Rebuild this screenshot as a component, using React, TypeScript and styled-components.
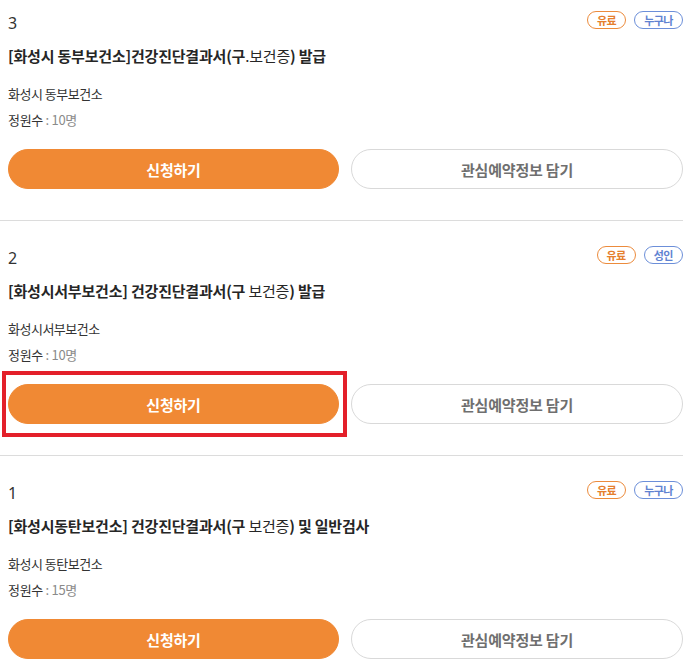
import React from "react";
import styled, { createGlobalStyle } from "styled-components";

const Global = createGlobalStyle`
  html, body { margin: 0; padding: 0; background: #fff; }
  body { font-family: "Noto Sans CJK KR", "Noto Sans", sans-serif; color: #222; }
`;

const List = styled.div`
  width: 683px;
`;

const Item = styled.div<{ $first?: boolean }>`
  padding: ${(p) => (p.$first ? "11px" : "25px")} 0 31px 8px;
  border-bottom: 1px solid #dcdcdc;
  &:last-child { border-bottom: none; }
`;

const Header = styled.div`
  display: flex;
  justify-content: space-between;
  align-items: flex-start;
  height: 25px;
`;

const Num = styled.div`
  font-family: "Noto Sans", sans-serif;
  font-size: 16px;
  line-height: 25px;
  color: #333;
`;

const Badges = styled.div`
  display: flex;
  gap: 8px;
`;

const Badge = styled.span<{ $tone: "orange" | "blue" }>`
  box-sizing: border-box;
  height: 18px;
  padding: 0 9px;
  border-radius: 9px;
  border: 1px solid ${(p) => (p.$tone === "orange" ? "#ec8b3c" : "#6c8fd9")};
  color: ${(p) => (p.$tone === "orange" ? "#e57f2e" : "#5f83d1")};
  font-size: 11px;
  font-weight: 700;
  line-height: 16px;
  letter-spacing: -0.5px;
`;

const Title = styled.div`
  margin-top: 8px;
  font-size: 15px;
  font-weight: 700;
  line-height: 24px;
  color: #262626;
  letter-spacing: -0.2px;
`;

const Light = styled.span`
  font-weight: 400;
`;

const Org = styled.div`
  margin-top: 16px;
  font-size: 13px;
  line-height: 20px;
  color: #333;
  letter-spacing: -0.5px;
`;

const Cap = styled.div`
  margin-top: 6px;
  font-size: 13px;
  line-height: 20px;
  color: #333;
  letter-spacing: -0.3px;
`;

const CapValue = styled.span`
  color: #8a8a8a;
`;

const Buttons = styled.div`
  margin-top: 19px;
  display: grid;
  grid-template-columns: 331px 332px;
  gap: 12px;
`;

const BtnWrap = styled.div`
  position: relative;
`;

const Btn = styled.button<{ $primary?: boolean }>`
  box-sizing: border-box;
  width: 100%;
  height: 40px;
  border-radius: 20px;
  border: 1px solid ${(p) => (p.$primary ? "#f08934" : "#d9d9d9")};
  background: ${(p) => (p.$primary ? "#f08934" : "#fff")};
  color: ${(p) => (p.$primary ? "#fff" : "#6f6f6f")};
  font-family: "Noto Sans CJK KR", sans-serif;
  font-size: 15px;
  font-weight: 700;
  letter-spacing: -0.2px;
  padding: 0;
  cursor: pointer;
`;

const Highlight = styled.div`
  position: absolute;
  left: -6px;
  right: -8px;
  top: -13px;
  bottom: -13px;
  border: 4px solid #e3202a;
  pointer-events: none;
`;

type Entry = {
  n: number;
  badges: { text: string; tone: "orange" | "blue" }[];
  title: React.ReactNode;
  org: string;
  cap: string;
  highlight?: boolean;
};

const entries: Entry[] = [
  {
    n: 3,
    badges: [
      { text: "유료", tone: "orange" },
      { text: "누구나", tone: "blue" },
    ],
    title: (
      <>
        [화성시 동부보건소]건강진단결과서(구<Light>.보건증</Light>) 발급
      </>
    ),
    org: "화성시 동부보건소",
    cap: "10명",
  },
  {
    n: 2,
    badges: [
      { text: "유료", tone: "orange" },
      { text: "성인", tone: "blue" },
    ],
    title: (
      <>
        [화성시서부보건소] 건강진단결과서(구 <Light>보건증</Light>) 발급
      </>
    ),
    org: "화성시서부보건소",
    cap: "10명",
    highlight: true,
  },
  {
    n: 1,
    badges: [
      { text: "유료", tone: "orange" },
      { text: "누구나", tone: "blue" },
    ],
    title: (
      <>
        [화성시동탄보건소] 건강진단결과서(구 <Light>보건증</Light>) 및 일반검사
      </>
    ),
    org: "화성시 동탄보건소",
    cap: "15명",
  },
];

export default function App() {
  return (
    <>
      <Global />
      <List>
        {entries.map((e, i) => (
          <Item key={e.n} $first={i === 0}>
            <Header>
              <Num>{e.n}</Num>
              <Badges>
                {e.badges.map((b) => (
                  <Badge key={b.text} $tone={b.tone}>
                    {b.text}
                  </Badge>
                ))}
              </Badges>
            </Header>
            <Title>{e.title}</Title>
            <Org>{e.org}</Org>
            <Cap>
              정원수 <CapValue>: {e.cap}</CapValue>
            </Cap>
            <Buttons>
              <BtnWrap>
                <Btn $primary>신청하기</Btn>
                {e.highlight && <Highlight />}
              </BtnWrap>
              <BtnWrap>
                <Btn>관심예약정보 담기</Btn>
              </BtnWrap>
            </Buttons>
          </Item>
        ))}
      </List>
    </>
  );
}
